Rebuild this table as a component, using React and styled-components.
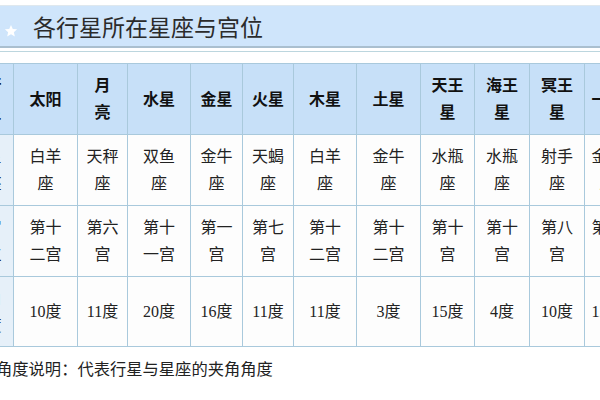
import React from "react"
import styled, { createGlobalStyle } from "styled-components"

const GlobalStyle = createGlobalStyle`
	html, body {
		margin: 0;
		padding: 0;
		background: #fff;
	}
	body {
		font-family: "Noto Sans CJK SC", "Noto Sans", sans-serif;
		width: 600px;
		height: 400px;
		overflow: hidden;
	}
`

const Page = styled.div`
	width: 600px;
	height: 400px;
	overflow: hidden;
	padding-top: 5px;
	box-sizing: border-box;
`

const TitleBar = styled.div`
	height: 43px;
	border-top: 1px solid #dfe8ee;
	border-bottom: 2px solid #aabfcf;
	background: #cfe5fb;
	display: flex;
	align-items: center;
	gap: 15px;
	padding-left: 4px;
	box-sizing: border-box;
`

const Star = styled.svg`
	width: 14px;
	height: 14px;
	margin-top: 10px;
	flex: none;
`

const Title = styled.h1`
	margin: 0;
	font-size: 23px;
	font-weight: 400;
	color: #2b2b2b;
	line-height: 1;
	font-family: "Noto Sans CJK SC", sans-serif;
`

const Divider = styled.div`
	margin-top: 3px;
	height: 1px;
	background: #bcd6de;
	margin-bottom: 11px;
`

const TableWrap = styled.div`
	width: 600px;
	overflow: hidden;
`

// first column hangs off the left edge, only its right 13px show
const Table = styled.table`
	margin-left: -27px;
	border-collapse: collapse;
	table-layout: fixed;
	width: ${p => p.$w}px;
`

const Cell = styled.td`
	border: 1px solid #a9c9dc;
	background: ${p => (p.$head ? "#c7e0f8" : p.$side ? "#e6f0f9" : "#fdfdfd")};
	font-weight: ${p => (p.$head ? 700 : 400)};
	color: ${p => (p.$head ? "#111" : "#222")};
	font-size: 16px;
	line-height: 27px;
	text-align: center;
	vertical-align: middle;
	padding: 0;
	white-space: nowrap;
	overflow: hidden;
	height: ${p => p.$h}px;
	font-family: "Liberation Serif", "Noto Sans CJK SC", serif;
	box-sizing: border-box;
`

const Note = styled.p`
	margin: 11px 0 0 -4px;
	font-size: 16.3px;
	line-height: 20px;
	color: #222;
	font-family: "Noto Sans CJK SC", sans-serif;
`

const widths = [40, 64, 50, 63, 52, 51, 63, 64, 54, 55, 55, 46]
const tableWidth = widths.reduce((a, b) => a + b, 0)

const rows = [
	{ head: true, h: 71, side: "行/星", cells: ["太阳", "月/亮", "水星", "金星", "火星", "木星", "土星", "天王/星", "海王/星", "冥王/星", "一宫"] },
	{ h: 71, side: "星/座", cells: ["白羊/座", "天秤/座", "双鱼/座", "金牛/座", "天蝎/座", "白羊/座", "金牛/座", "水瓶/座", "水瓶/座", "射手/座", "金牛/座"] },
	{ h: 71, side: "宫/位", cells: ["第十/二宫", "第六/宫", "第十/一宫", "第一/宫", "第七/宫", "第十/二宫", "第十/二宫", "第十/宫", "第十/宫", "第八/宫", "第五/宫"] },
	{ h: 70, side: "角/度", cells: ["10度", "11度", "20度", "16度", "11度", "11度", "3度", "15度", "4度", "10度", "12度"] },
]

const Lines = ({ text }) =>
	text.split("/").map((t, i) => (
		<React.Fragment key={i}>
			{i > 0 && <br />}
			{t}
		</React.Fragment>
	))

export default function App() {
	return (
		<Page>
			<GlobalStyle />
			<TitleBar>
				<Star viewBox="0 0 24 24">
					<path d="M12 1.5l3.1 7 7.4.6-5.6 4.9 1.7 7.4L12 17.5l-6.6 3.9 1.7-7.4L1.5 9.1l7.4-.6z" fill="#fff" />
				</Star>
				<Title>各行星所在星座与宫位</Title>
			</TitleBar>
			<Divider />
			<TableWrap>
				<Table $w={tableWidth}>
					<colgroup>
						{widths.map((w, i) => <col key={i} style={{ width: w }} />)}
					</colgroup>
					<tbody>
						{rows.map((r, ri) => (
							<tr key={ri}>
								<Cell $head={r.head} $side $h={r.h}><Lines text={r.side} /></Cell>
								{r.cells.map((c, ci) => (
									<Cell key={ci} $head={r.head} $h={r.h}><Lines text={c} /></Cell>
								))}
							</tr>
						))}
					</tbody>
				</Table>
			</TableWrap>
			<Note>角度说明：代表行星与星座的夹角角度</Note>
		</Page>
	)
}
